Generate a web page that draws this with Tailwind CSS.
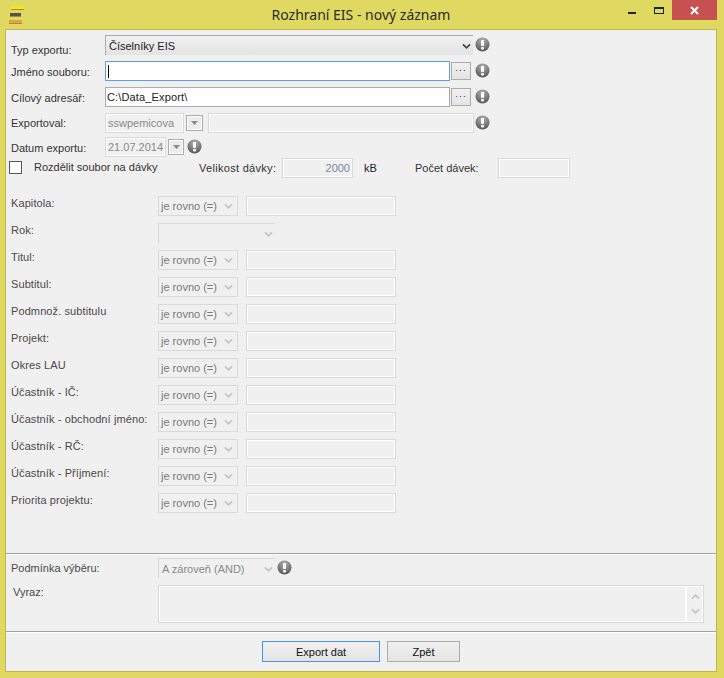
<!DOCTYPE html>
<html lang="cs">
<head>
<meta charset="utf-8">
<title>Rozhraní EIS - nový záznam</title>
<script src="https://cdn.jsdelivr.net/npm/@tailwindcss/browser@4"></script>
</head>
<body class="bg-[#dfd962]">
<svg class="absolute w-0 h-0" width="0" height="0">
  <defs>
    <radialGradient id="warn-fill" cx="50%" cy="25%" r="80%">
      <stop offset="0" stop-color="#b4b4b4"/>
      <stop offset="1" stop-color="#4f4f4f"/>
    </radialGradient>
    <symbol id="warn" viewBox="0 0 15 15">
      <circle cx="7.5" cy="7.5" r="7" fill="url(#warn-fill)"/>
      <rect x="6" y="3" width="3" height="6" rx="1" fill="#fff"/>
      <rect x="6" y="10" width="3" height="2.4" rx="1" fill="#fff"/>
    </symbol>
    <symbol id="chev" viewBox="0 0 10 8">
      <path d="M1 1.5 L5 5.5 L9 1.5" fill="none" stroke="currentColor" stroke-width="2"/>
    </symbol>
  </defs>
</svg>

<div class="w-[724px] h-[678px] flex flex-col overflow-hidden font-['Liberation_Sans',Arial,sans-serif] text-[11px] leading-[14px] text-[#333]">
  <!-- title bar -->
  <div class="h-[29px] shrink-0 flex relative">
    <div class="absolute left-[9px] top-[6px] w-[15px] flex flex-col gap-[3px]">
      <div class="h-[4px] ml-[2px] w-[13px] bg-[#f7e31f] border-b border-[#9a9440]"></div>
      <div class="h-[4px] ml-[1px] w-[11px] bg-[#55534a] border-b border-[#9a9440]"></div>
      <div class="h-[4px] w-[13px] bg-[#ef9c45] border-b border-[#9a9440]"></div>
    </div>
    <div class="w-full text-center pt-[5px] pr-[2px] font-['Noto_Sans',sans-serif] text-[14px] leading-[20px] text-[#2b2b2b]">Rozhraní EIS - nový záznam</div>
    <div class="absolute left-[628px] top-[12px] w-[8px] h-[2px] bg-[#222]"></div>
    <div class="absolute left-[654px] top-[7px] w-[10px] h-[7px] border border-t-2 border-[#222]"></div>
    <div class="absolute left-[672px] top-0 w-[45px] h-[20px] bg-[#c75050] flex items-center justify-center">
      <svg width="9" height="9" viewBox="0 0 9 9"><path d="M1 1 L8 8 M8 1 L1 8" stroke="#fff" stroke-width="2"/></svg>
    </div>
  </div>

  <!-- window body -->
  <div class="ml-[5px] mr-[7px] h-[643px] shrink-0 border border-[#bdb64a] bg-[#f0f0f0] flex flex-col">
    <div class="pl-[5px] pt-[5px] flex flex-col">
      <div class="flex h-[20px]">
        <div class="w-[94px] pt-[8px]">Typ exportu:</div>
        <div class="w-[368px] border-t border-l border-[#acacac] bg-gradient-to-b from-[#f0f0f0] to-[#e4e4e4] flex items-center justify-between pl-[3px] pr-[2px] text-[#222]">Číselníky EIS<svg class="w-[9px] h-[7px] mt-[1px] text-[#444]"><use href="#chev"/></svg></div>
        <svg class="w-[15px] h-[15px] ml-[2px] mt-[2px]"><use href="#warn"/></svg>
      </div>
      <div class="flex h-[20px] mt-[6px]">
        <div class="w-[94px] pt-[4px]">Jméno souboru:</div>
        <div class="w-[345px] border border-[#5b9fe4] bg-white flex items-center pl-[2px]"><div class="w-px h-[13px] bg-black"></div></div>
        <div class="w-[20px] h-[18px] mt-px ml-px border border-[#acacac] bg-gradient-to-b from-[#f0f0f0] to-[#e4e4e4] flex justify-center pt-[2px] text-[#800080] text-[9px] leading-[10px] tracking-[1px]">···</div>
        <svg class="w-[15px] h-[15px] ml-[4px] mt-[2px]"><use href="#warn"/></svg>
      </div>
      <div class="flex h-[20px] mt-[6px]">
        <div class="w-[94px] pt-[4px]">Cílový adresář:</div>
        <div class="w-[345px] border border-[#acacac] bg-white flex items-center pl-[1px] text-[#222] tracking-[0.15px]">C:\Data_Export\</div>
        <div class="w-[20px] h-[18px] mt-px ml-px border border-[#acacac] bg-gradient-to-b from-[#f0f0f0] to-[#e4e4e4] flex justify-center pt-[2px] text-[#800080] text-[9px] leading-[10px] tracking-[1px]">···</div>
        <svg class="w-[15px] h-[15px] ml-[4px] mt-[2px]"><use href="#warn"/></svg>
      </div>
      <div class="flex h-[20px] mt-[6px]">
        <div class="w-[94px] pt-[3px]">Exportoval:</div>
        <div class="w-[79px] border border-[#d9d9d9] shadow-[inset_0_0_0_1px_#fff] flex items-center pl-[2px] text-[#8a8a8a]">sswpemicova</div>
        <div class="w-[17px] h-[16px] mt-[2px] ml-[2px] border border-[#acacac] shadow-[inset_0_0_0_1px_#fff] bg-[#ececec] flex items-center justify-center text-[#8c8c8c]"><svg class="w-[7px] h-[4px]" viewBox="0 0 7 4"><path d="M0 0 H7 L3.5 4 Z" fill="currentColor"/></svg></div>
        <div class="w-[266px] ml-[5px] border border-[#d9d9d9] shadow-[inset_0_0_0_1px_#fff]"></div>
        <svg class="w-[15px] h-[15px] ml-[1px] mt-[2px]"><use href="#warn"/></svg>
      </div>
      <div class="flex h-[20px] mt-[4px]">
        <div class="w-[94px] pt-[4px]">Datum exportu:</div>
        <div class="w-[61px] border border-[#d9d9d9] shadow-[inset_0_0_0_1px_#fff] flex items-center pl-[2px] text-[#8a8a8a]">21.07.2014</div>
        <div class="w-[16px] h-[16px] mt-[2px] ml-[2px] border border-[#acacac] shadow-[inset_0_0_0_1px_#fff] bg-[#ececec] flex items-center justify-center text-[#8c8c8c]"><svg class="w-[7px] h-[4px]" viewBox="0 0 7 4"><path d="M0 0 H7 L3.5 4 Z" fill="currentColor"/></svg></div>
        <svg class="w-[15px] h-[15px] ml-[3px] mt-[2px]"><use href="#warn"/></svg>
      </div>
      <div class="flex h-[20px] mt-px">
        <div class="w-[13px] h-[13px] -ml-[2px] mt-[3px] border border-[#555] bg-white shrink-0"></div>
        <div class="ml-[12px] w-[165px] pt-[2px]">Rozdělit soubor na dávky</div>
        <div class="w-[83px] pt-[3px] tracking-[0.3px]">Velikost dávky:</div>
        <div class="w-[71px] border border-[#d9d9d9] shadow-[inset_0_0_0_1px_#fff] flex items-center justify-end pr-[2px] text-[#7d8a98]">2000</div>
        <div class="ml-[11px] w-[51px] pt-[3px] text-[#222]">kB</div>
        <div class="w-[83px] pt-[3px]">Počet dávek:</div>
        <div class="w-[72px] border border-[#d9d9d9] shadow-[inset_0_0_0_1px_#fff]"></div>
      </div>

      <!-- filter rows, filled in below -->
      <div id="filter-rows" class="mt-[18px] flex flex-col gap-[7px] text-[#4a4a4a]"></div>
    </div>

    <div class="mt-[40px] h-px bg-[#a0a0a0] shrink-0"></div>
    <div class="h-px bg-white shrink-0"></div>

    <div class="pl-[5px] mt-[3px] flex h-[20px] text-[#4a4a4a]">
      <div class="w-[147px] pt-[3px]">Podmínka výběru:</div>
      <div class="w-[117px] border-t border-l border-[#d9d9d9] flex items-center justify-between pl-[3px] pr-[2px] text-[#8a8a8a]">A zároveň (AND)<svg class="w-[9px] h-[7px] mt-[1px] text-[#c4c4c4]"><use href="#chev"/></svg></div>
      <svg class="w-[15px] h-[15px] ml-[2px] mt-[2px]"><use href="#warn"/></svg>
    </div>
    <div class="pl-[5px] mt-[7px] flex h-[38px] text-[#4a4a4a]">
      <div class="w-[147px] pl-[2px]">Vyraz:</div>
      <div class="w-[546px] border border-[#d9d9d9] shadow-[inset_0_0_0_1px_#fff] flex justify-end">
        <div class="w-[18px] border-l-2 border-white flex flex-col items-center justify-center gap-[8px] text-[#c4c4c4]">
          <svg class="w-[9px] h-[7px] rotate-180"><use href="#chev"/></svg>
          <svg class="w-[9px] h-[7px]"><use href="#chev"/></svg>
        </div>
      </div>
    </div>

    <div class="mt-[8px] h-px bg-[#a0a0a0] shrink-0"></div>
    <div class="h-px bg-white shrink-0"></div>

    <div class="mt-[8px] flex h-[21px] text-[#111]">
      <div class="ml-[256px] w-[118px] border border-[#4a94e6] bg-gradient-to-b from-[#f0f0f0] to-[#e4e4e4] flex items-center justify-center">Export dat</div>
      <div class="ml-[7px] w-[73px] border border-[#acacac] bg-gradient-to-b from-[#f0f0f0] to-[#e4e4e4] flex items-center justify-center">Zpět</div>
    </div>
  </div>
</div>

<script>
// filter rows: same select + input pair, only Rok differs
const FILTER_LABELS = ["Kapitola:", "Rok:", "Titul:", "Subtitul:", "Podmnož. subtitulu", "Projekt:", "Okres LAU",
  "Účastník - IČ:", "Účastník - obchodní jméno:", "Účastník - RČ:", "Účastník - Příjmení:", "Priorita projektu:"];

document.getElementById('filter-rows').innerHTML = FILTER_LABELS.map(label => {
  const controls = label === "Rok:"
    ? `<div class="w-[117px] border-t border-l border-[#d9d9d9] flex items-center justify-end pr-[2px]"><svg class="w-[9px] h-[7px] mt-[1px] text-[#c4c4c4]"><use href="#chev"/></svg></div>`
    : `<div class="w-[80px] border border-[#d9d9d9] flex items-center justify-between pl-[2px] pr-[4px] text-[#7a7a7a]">je rovno (=)<svg class="w-[9px] h-[7px] mt-[1px] text-[#c4c4c4]"><use href="#chev"/></svg></div>
       <div class="w-[150px] ml-[8px] border border-[#d9d9d9] shadow-[inset_0_0_0_1px_#fff]"></div>`;
  return `<div class="flex h-[20px]"><div class="w-[147px] tracking-[0.1px]">${label}</div>${controls}</div>`;
}).join('');
</script>
</body>
</html>
